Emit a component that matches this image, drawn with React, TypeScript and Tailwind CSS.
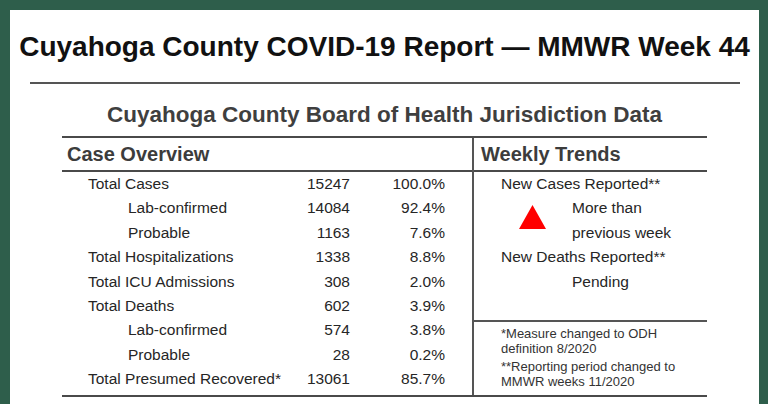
const ROWS = [
  { label: "Total Cases", value: "15247", pct: "100.0%", sub: false },
  { label: "Lab-confirmed", value: "14084", pct: "92.4%", sub: true },
  { label: "Probable", value: "1163", pct: "7.6%", sub: true },
  { label: "Total Hospitalizations", value: "1338", pct: "8.8%", sub: false },
  { label: "Total ICU Admissions", value: "308", pct: "2.0%", sub: false },
  { label: "Total Deaths", value: "602", pct: "3.9%", sub: false },
  { label: "Lab-confirmed", value: "574", pct: "3.8%", sub: true },
  { label: "Probable", value: "28", pct: "0.2%", sub: true },
  { label: "Total Presumed Recovered*", value: "13061", pct: "85.7%", sub: false },
];

function Triangle() {
  return (
    <svg width="27" height="24" viewBox="0 0 27 24" className="shrink-0">
      <polygon points="13.5,0 27,24 0,24" fill="#ff0000" />
    </svg>
  );
}

export default function App() {
  return (
    <div
      className="w-[768px] h-[404px] overflow-hidden bg-white border-t-[10px] border-l-[10px] border-r-[9px] border-[#2e5e4b] flex flex-col items-center pt-[21px] text-[#262626]"
      style={{ fontFamily: '"Liberation Sans", Arial, sans-serif' }}
    >
      <h1 className="text-[28px] leading-[32px] font-bold text-[#111] whitespace-nowrap">
        Cuyahoga County COVID-19 Report — MMWR Week 44
      </h1>
      <div className="mt-[19px] w-[710px] h-[2px] bg-[#555]" />
      <h2 className="mt-[18px] text-[22.5px] leading-[26px] font-bold text-[#3f3f3f] whitespace-nowrap">
        Cuyahoga County Board of Health Jurisdiction Data
      </h2>

      <div className="mt-[8px] w-[645px] flex border-t-2 border-b-2 border-[#4a4a4a] pb-[3.6px]">
        {/* Case overview (left) */}
        <div className="w-[412px] border-r-2 border-[#555] -mb-[3.6px] pb-[3.6px]">
          <div className="h-[34px] border-b-2 border-[#4a4a4a] pl-[5px] text-[20px] leading-[32px] font-bold text-[#3c3c3c]">
            Case Overview
          </div>
          {ROWS.map((r, i) => (
            <div key={i} className="flex h-[24.4px] text-[15.5px] leading-[24.4px] whitespace-nowrap">
              <div className={r.sub ? "w-[228px] pl-[66px]" : "w-[228px] pl-[26px]"}>{r.label}</div>
              <div className="w-[60px] text-right">{r.value}</div>
              <div className="w-[95px] text-right">{r.pct}</div>
            </div>
          ))}
        </div>

        {/* Weekly trends (right) */}
        <div className="flex-1 flex flex-col">
          <div className="h-[34px] border-b-2 border-[#4a4a4a] pl-[7px] text-[20px] leading-[32px] font-bold text-[#3c3c3c]">
            Weekly Trends
          </div>
          <div className="h-[150px] border-b-2 border-[#555] text-[15.5px] leading-[24.4px] whitespace-nowrap">
            <div className="pl-[27px]">New Cases Reported**</div>
            <div className="flex items-start pl-[45px]">
              <div className="mt-[8.6px]">
                <Triangle />
              </div>
              <div className="ml-[26px]">
                More than
                <br />
                previous week
              </div>
            </div>
            <div className="pl-[27px]">New Deaths Reported**</div>
            <div className="pl-[98px]">Pending</div>
          </div>
          <div className="pt-[4px] pl-[27px] text-[13px] leading-[15px] text-[#333] whitespace-nowrap">
            <p>
              *Measure changed to ODH
              <br />
              definition 8/2020
            </p>
            <p className="mt-[3px]">
              **Reporting period changed to
              <br />
              MMWR weeks 11/2020
            </p>
          </div>
        </div>
      </div>
    </div>
  );
}
